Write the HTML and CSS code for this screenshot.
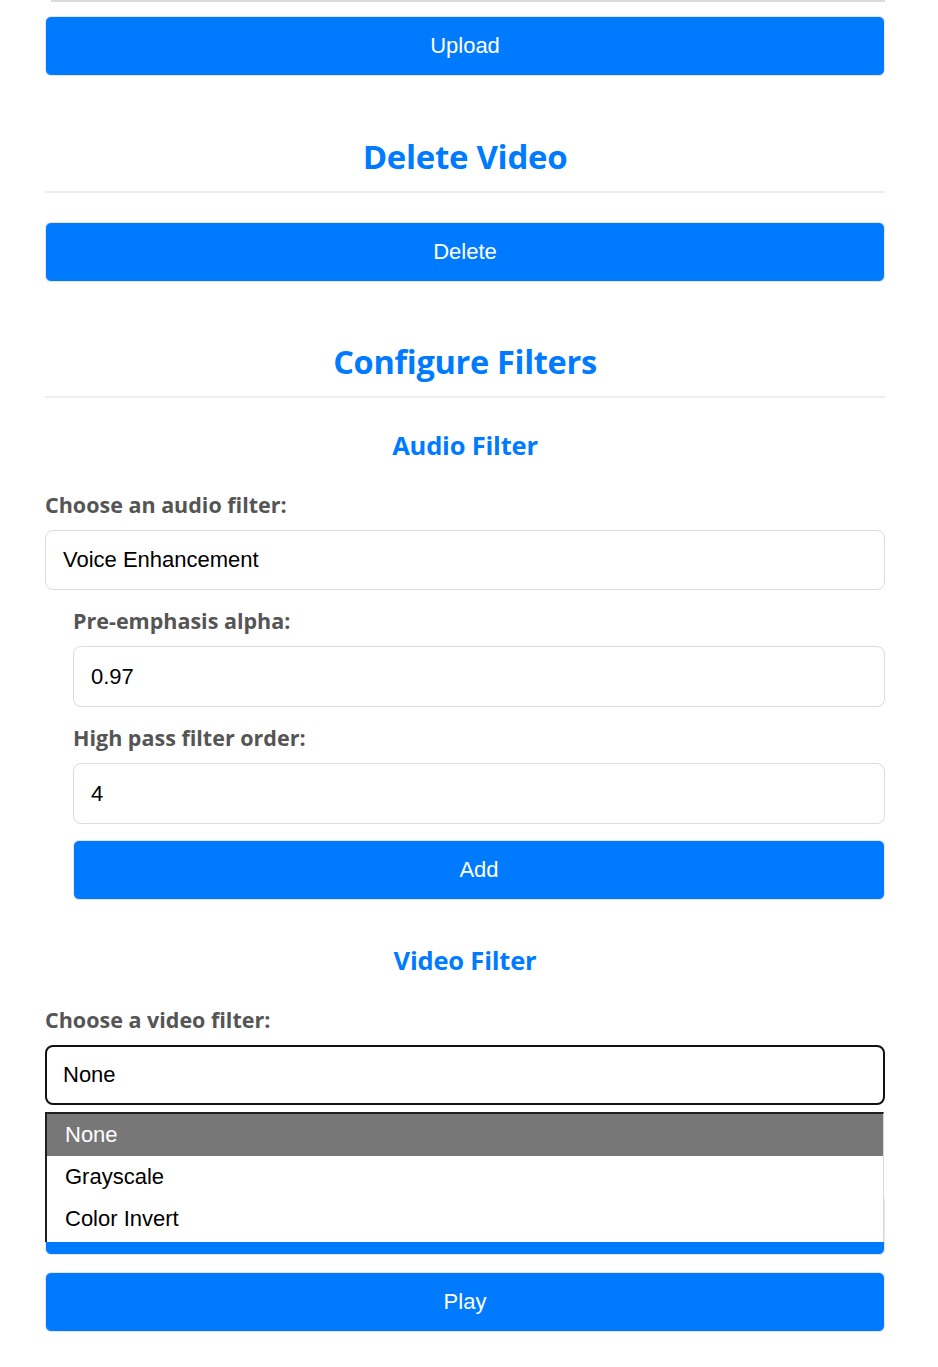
FILE: index.html
```html
<!DOCTYPE html>
<html lang="en">
<head>
<meta charset="utf-8">
<title>Video Filters</title>
<link rel="stylesheet" href="styles.css">
</head>
<body>
<div class="container">
  <div class="file-edge"></div>
  <button class="btn btn-upload">Upload</button>

  <h2 class="section-title">Delete Video</h2>
  <button class="btn btn-delete">Delete</button>

  <h2 class="section-title section-title-filters">Configure Filters</h2>

  <h3 class="sub-title">Audio Filter</h3>
  <label class="field-label">Choose an audio filter:</label>
  <div class="field">Voice Enhancement</div>

  <div class="params">
    <label class="field-label param-label">Pre-emphasis alpha:</label>
    <div class="field field-param">0.97</div>
    <label class="field-label param-label">High pass filter order:</label>
    <div class="field field-param">4</div>
    <button class="btn btn-add">Add</button>
  </div>

  <h3 class="sub-title sub-title-video">Video Filter</h3>
  <label class="field-label">Choose a video filter:</label>
  <div class="select-wrap">
    <div class="field field-focus">None</div>
    <ul class="dropdown">
      <li class="option option-selected">None</li>
      <li class="option">Grayscale</li>
      <li class="option">Color Invert</li>
    </ul>
  </div>
  <button class="btn btn-apply">Add</button>
  <button class="btn btn-play">Play</button>
</div>
</body>
</html>
```

FILE: styles.css
```css
* { box-sizing: border-box; }

body {
  margin: 0;
  background: #fff;
  font-family: "Liberation Sans", Arial, sans-serif;
}

.container {
  width: 840px;
  margin-left: 45px;
  display: flex;
  flex-direction: column;
}

.file-edge {
  height: 2px;
  margin: 0 0 0 6px;
  background: #dcdcdc;
}

.btn {
  display: block;
  width: 100%;
  height: 60px;
  background: #007bff;
  color: #fff;
  border: 1px solid #e6e6e6;
  border-radius: 6px;
  font-family: "Liberation Sans", Arial, sans-serif;
  font-size: 22px;
  padding: 0;
}

.btn-upload { margin-top: 14px; }

.section-title {
  margin: 61px 0 0;
  font-family: "Open Sans", "Noto Sans", sans-serif;
  font-weight: 700;
  font-size: 33px;
  line-height: 40px;
  color: #007bff;
  text-align: center;
  padding-bottom: 14px;
  border-bottom: 2px solid #eeeeee;
  letter-spacing: -0.3px;
}

.btn-delete { margin-top: 29px; }

.section-title-filters {
  margin-top: 60px;
  font-size: 32.5px;
}

.sub-title {
  margin: 31px 0 0;
  font-family: "Open Sans", "Noto Sans", sans-serif;
  font-weight: 700;
  font-size: 25.5px;
  line-height: 32px;
  color: #007bff;
  text-align: center;
  letter-spacing: -0.2px;
}

.field-label {
  display: block;
  margin-top: 30px;
  font-family: "Open Sans", "Noto Sans", sans-serif;
  font-weight: 700;
  font-size: 21.5px;
  line-height: 28px;
  color: #555;
  letter-spacing: 0;
}

.field {
  margin-top: 11px;
  height: 60px;
  border: 1px solid #dcdcdc;
  border-radius: 8px;
  padding: 0 17px;
  display: flex;
  align-items: center;
  font-size: 22px;
  color: #000;
  background: #fff;
}

.params {
  margin-left: 28px;
  display: flex;
  flex-direction: column;
}

.param-label { margin-top: 17px; }

.field-param { height: 61px; }

.btn-add { margin-top: 16px; }

.sub-title-video { margin-top: 44px; }

.select-wrap {
  position: relative;
  margin-top: 11px;
}

.field-focus {
  margin-top: 0;
  border: 2px solid #111;
  padding-left: 16px;
}

.dropdown {
  position: absolute;
  left: 0;
  top: 67px;
  width: 839px;
  margin: 0;
  padding: 0;
  list-style: none;
  background: #fff;
  border-top: 2px solid #1e1e1e;
  border-left: 2px solid #1e1e1e;
  border-right: 1px solid #d8d8d8;
  z-index: 2;
}

.option {
  height: 42px;
  line-height: 42px;
  padding-left: 18px;
  font-size: 22px;
  color: #000;
}

.option-selected {
  background: #777;
  color: #fff;
}

.option:last-child { height: 44px; }

.btn-apply { margin-top: 90px; }

.btn-play { margin-top: 17px; }
```
